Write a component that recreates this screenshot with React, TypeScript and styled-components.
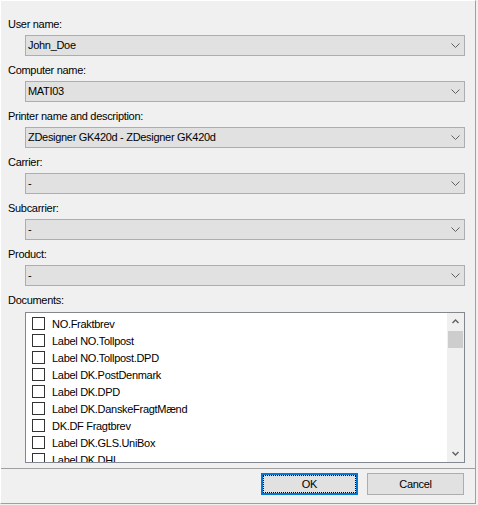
import React from "react";
import styled, { createGlobalStyle } from "styled-components";

const GlobalStyle = createGlobalStyle`
  html, body { margin: 0; padding: 0; background: #f0f0f0; }
  * { box-sizing: border-box; }
`;

const Frame = styled.div`
  width: 478px;
  height: 505px;
  padding: 0 2px 1px 0;
  background: #f0f0f0;
  font-family: "Liberation Sans", Arial, sans-serif;
  font-size: 11px;
  letter-spacing: -0.3px;
  color: #000;
`;

const Panel = styled.div`
  height: 100%;
  display: flex;
  flex-direction: column;
  border-top: 1px solid #ffffff;
  border-left: 1px solid #ffffff;
  border-right: 1px solid #a0a0a0;
  border-bottom: 1px solid #a0a0a0;
`;

const Form = styled.div`
  flex: 1;
  display: flex;
  flex-direction: column;
  gap: 8px;
  padding-top: 17px;
`;

const Field = styled.div`
  display: flex;
  flex-direction: column;
`;

const Label = styled.div<{ $gap?: number }>`
  padding-left: 7px;
  height: 13px;
  line-height: 13px;
  margin-bottom: ${(p) => p.$gap ?? 4}px;
  white-space: nowrap;
`;

const Combo = styled.div`
  margin-left: 24px;
  width: 440px;
  height: 21px;
  border: 1px solid #adadad;
  background: #e1e1e1;
  display: flex;
  align-items: center;
  padding-left: 2px;
`;

const ComboText = styled.span`
  flex: 1;
  white-space: nowrap;
  line-height: 13px;
`;

const ArrowBox = styled.span`
  width: 17px;
  height: 100%;
  display: flex;
  align-items: center;
  justify-content: center;
`;

const ListBox = styled.div`
  margin-left: 24px;
  width: 440px;
  height: 151px;
  border: 1px solid #828790;
  background: #ffffff;
  display: flex;
`;

const Items = styled.div`
  flex: 1;
  padding-top: 2px;
  overflow: hidden;
`;

const Row = styled.div`
  height: 17px;
  display: flex;
  align-items: center;
  padding-left: 6px;
  gap: 7px;
  white-space: nowrap;
`;

const CheckBox = styled.span`
  width: 13px;
  height: 13px;
  flex: none;
  border: 1px solid #333333;
  background: #ffffff;
`;

const ScrollBar = styled.div`
  width: 17px;
  background: #f0f0f0;
  display: flex;
  flex-direction: column;
`;

const ScrollButton = styled.div`
  height: 17px;
  display: flex;
  align-items: center;
  justify-content: center;
`;

const Thumb = styled.div`
  margin: 1px 1px 0 1px;
  height: 17px;
  background: #cdcdcd;
`;

const Track = styled.div`
  flex: 1;
`;

const ButtonBar = styled.div`
  border-top: 1px solid #a0a0a0;
  display: flex;
  justify-content: flex-end;
  gap: 9px;
  padding: 4px 11px 8px 0;
`;

const Button = styled.button<{ $default?: boolean }>`
  position: relative;
  width: 97px;
  height: 22px;
  margin: 0;
  padding: 0;
  font: inherit;
  letter-spacing: inherit;
  color: #000;
  background: #e1e1e1;
  border: ${(p) => (p.$default ? "2px solid #0078d7" : "1px solid #adadad")};
  ${(p) =>
    p.$default &&
    `
    &::after {
      content: "";
      position: absolute;
      inset: 0;
      border: 1px dotted #000;
    }
  `}
`;

const Chevron = ({ up }: { up?: boolean }) => (
  <svg width="9" height="5" viewBox="0 0 9 5">
    <path
      d={up ? "M0.5 4.5 L4.5 0.5 L8.5 4.5" : "M0.5 0.5 L4.5 4.5 L8.5 0.5"}
      fill="none"
      stroke="#606060"
      strokeWidth="1"
    />
  </svg>
);

const SmallChevron = ({ up }: { up?: boolean }) => (
  <svg width="7" height="5" viewBox="0 0 7 5">
    <path
      d={up ? "M0.5 4 L3.5 1 L6.5 4" : "M0.5 1 L3.5 4 L6.5 1"}
      fill="none"
      stroke="#606060"
      strokeWidth="1.4"
    />
  </svg>
);

const fields = [
  { label: "User name:", value: "John_Doe" },
  { label: "Computer name:", value: "MATI03" },
  { label: "Printer name and description:", value: "ZDesigner GK420d - ZDesigner GK420d" },
  { label: "Carrier:", value: "-" },
  { label: "Subcarrier:", value: "-" },
  { label: "Product:", value: "-" },
];

const documents = [
  "NO.Fraktbrev",
  "Label NO.Tollpost",
  "Label NO.Tollpost.DPD",
  "Label DK.PostDenmark",
  "Label DK.DPD",
  "Label DK.DanskeFragtMænd",
  "DK.DF Fragtbrev",
  "Label DK.GLS.UniBox",
  "Label DK.DHL",
];

export default function App() {
  return (
    <>
      <GlobalStyle />
      <Frame>
        <Panel>
          <Form>
            {fields.map((f) => (
              <Field key={f.label}>
                <Label>{f.label}</Label>
                <Combo>
                  <ComboText>{f.value}</ComboText>
                  <ArrowBox>
                    <Chevron />
                  </ArrowBox>
                </Combo>
              </Field>
            ))}
            <Field>
              <Label $gap={5}>Documents:</Label>
              <ListBox>
                <Items>
                  {documents.map((d) => (
                    <Row key={d}>
                      <CheckBox />
                      <span>{d}</span>
                    </Row>
                  ))}
                </Items>
                <ScrollBar>
                  <ScrollButton>
                    <SmallChevron up />
                  </ScrollButton>
                  <Thumb />
                  <Track />
                  <ScrollButton>
                    <SmallChevron />
                  </ScrollButton>
                </ScrollBar>
              </ListBox>
            </Field>
          </Form>
          <ButtonBar>
            <Button $default>OK</Button>
            <Button>Cancel</Button>
          </ButtonBar>
        </Panel>
      </Frame>
    </>
  );
}
